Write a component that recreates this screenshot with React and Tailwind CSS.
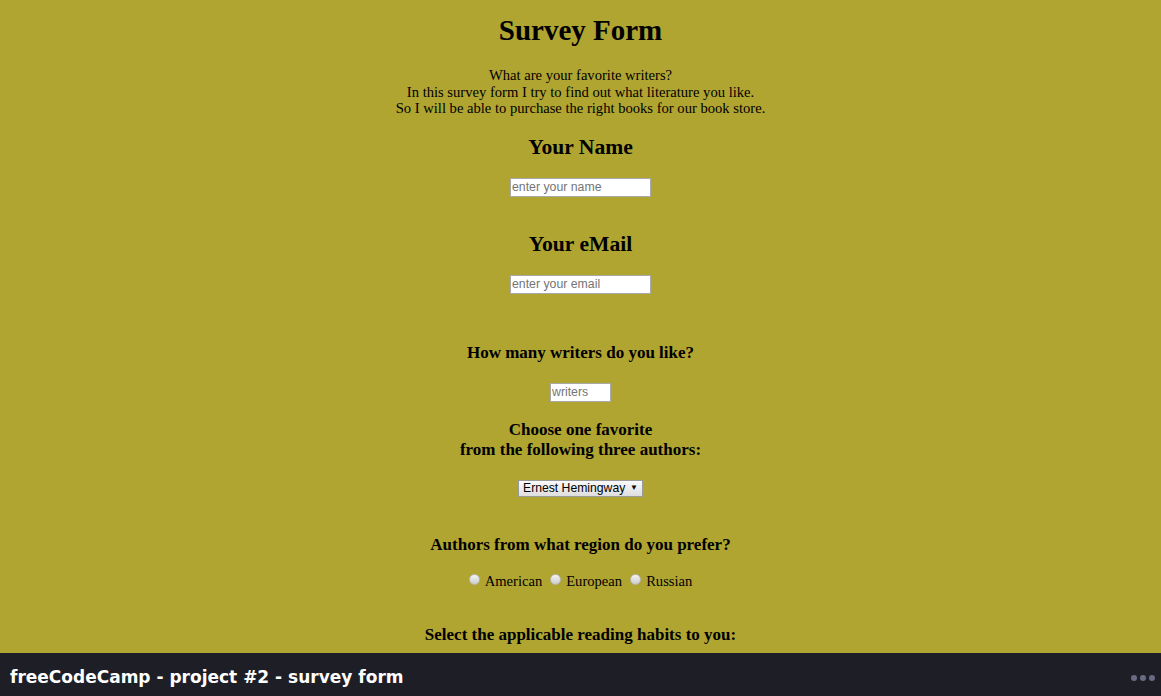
import React from 'react';

const serif = "font-['Liberation_Serif','Times_New_Roman',serif]";
const inputCls =
  "block mx-auto h-[19px] bg-white border border-[#a9a9a9] px-[1px] text-[12.3px] font-['Liberation_Sans',Arial,sans-serif] placeholder:text-[#757575] outline-none";

export default function App() {
  return (
    <div className="h-[696px] w-full flex flex-col overflow-hidden">
      <main className={`flex-1 overflow-hidden bg-[#b0a531] text-black text-center ${serif}`}>
        <h1 className="pt-[13px] text-[29px] leading-[34px] font-bold">Survey Form</h1>
        <p className="mt-[20px] text-[14.6px] leading-[16.5px]">
          What are your favorite writers?
          <br />
          In this survey form I try to find out what literature you like.
          <br />
          So I will be able to purchase the right books for our book store.
        </p>

        <h2 className="mt-[17px] text-[21.6px] leading-[26px] font-bold">Your Name</h2>
        <input type="text" placeholder="enter your name" className={`mt-[18px] w-[141px] ${inputCls}`} />

        <h2 className="mt-[34px] text-[21.6px] leading-[26px] font-bold">Your eMail</h2>
        <input type="email" placeholder="enter your email" className={`mt-[18px] w-[141px] ${inputCls}`} />

        <h3 className="mt-[49px] text-[17px] leading-[20px] font-bold">How many writers do you like?</h3>
        <input type="text" placeholder="writers" className={`mt-[20px] w-[61px] ${inputCls}`} />

        <h3 className="mt-[18px] text-[17px] leading-[20px] font-bold">
          Choose one favorite
          <br />
          from the following three authors:
        </h3>
        <div className="mt-[20px] mx-auto w-[125px] h-[17px] flex items-center justify-between whitespace-nowrap border border-[#9a9a9a] bg-gradient-to-b from-[#fafafa] to-[#dedede] pl-[4px] pr-[4px] text-[12.2px] leading-none font-['Liberation_Sans',Arial,sans-serif]">
          <span>Ernest Hemingway</span>
          <span className="text-[8px]">▼</span>
        </div>

        <h3 className="mt-[38px] text-[17px] leading-[20px] font-bold">Authors from what region do you prefer?</h3>
        <div className="mt-[17px] flex justify-center items-center gap-[8px] text-[14.6px] leading-[18px]">
          {['American', 'European', 'Russian'].map((r) => (
            <label key={r} className="flex items-center gap-[5px]">
              <span className="inline-block w-[11px] h-[11px] rounded-full bg-gradient-to-b from-[#f4f4f4] to-[#cdcdcd] border border-[#b8b8b8] -mt-[2px]" />
              {r}
            </label>
          ))}
        </div>

        <h3 className="mt-[35px] text-[17px] leading-[20px] font-bold">Select the applicable reading habits to you:</h3>
      </main>

      <footer className="h-[43px] shrink-0 bg-[#1e1f26] flex items-center justify-between pl-[10px] pr-[6px]">
        <span className="text-white font-bold text-[17px] font-['DejaVu_Sans',sans-serif] pt-[7px]">
          freeCodeCamp - project #2 - survey form
        </span>
        <span className="flex gap-[3px] pt-[6px]">
          <span className="w-[6px] h-[6px] rounded-full bg-[#696b84]" />
          <span className="w-[6px] h-[6px] rounded-full bg-[#696b84]" />
          <span className="w-[6px] h-[6px] rounded-full bg-[#696b84]" />
        </span>
      </footer>
    </div>
  );
}
